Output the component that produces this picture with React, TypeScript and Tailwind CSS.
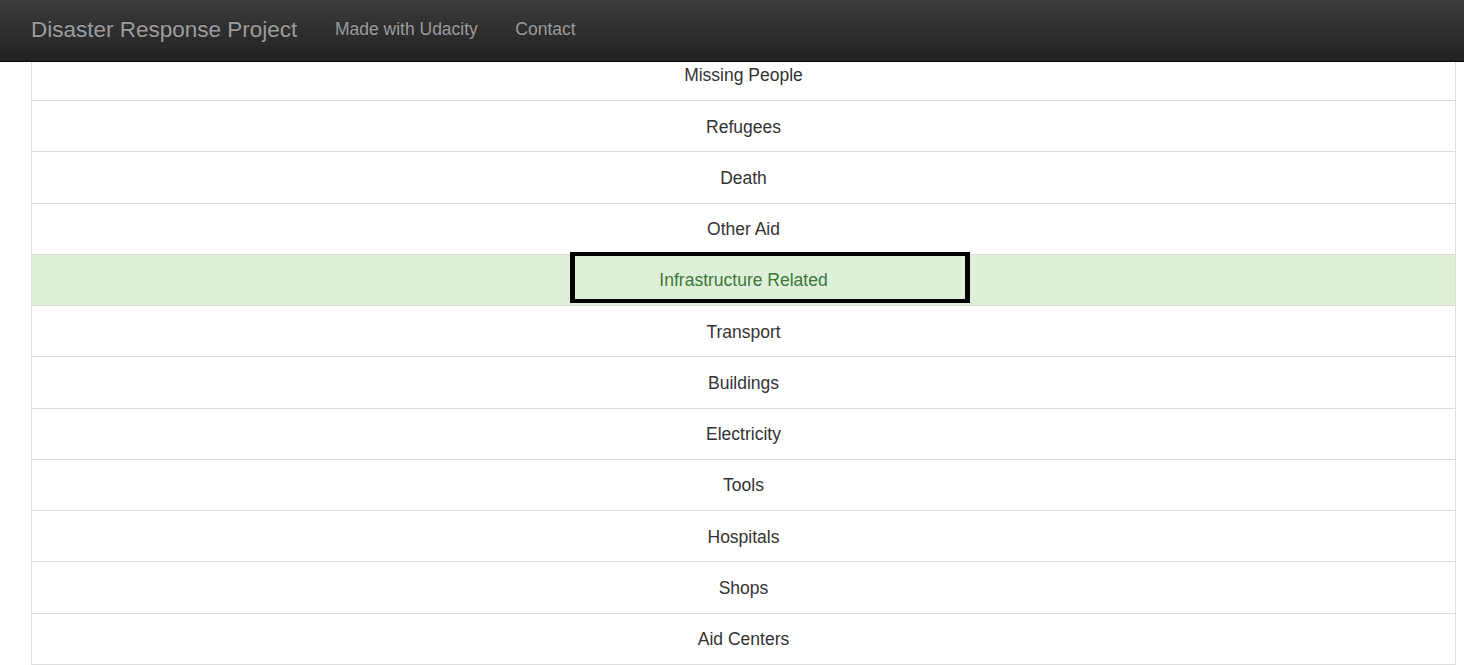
import React from "react";

const items = [
  "Missing People",
  "Refugees",
  "Death",
  "Other Aid",
  "Infrastructure Related",
  "Transport",
  "Buildings",
  "Electricity",
  "Tools",
  "Hospitals",
  "Shops",
  "Aid Centers",
];

export default function App() {
  return (
    <div className="min-h-[665px] bg-white font-['Liberation_Sans',Arial,sans-serif] text-[#333]">
      <nav className="fixed left-0 right-0 top-0 z-10 flex h-[62px] items-center border-b border-[#080808] bg-gradient-to-b from-[#3c3c3c] to-[#222] pb-[2px] pl-[12.25px]">
        <span className="px-[18.75px] text-[22.5px] leading-[25px] text-[#9d9d9d] [text-shadow:0_-1px_0_rgba(0,0,0,0.25)]">
          Disaster Response Project
        </span>
        <span className="px-[18.75px] text-[17.5px] leading-[25px] text-[#9d9d9d] [text-shadow:0_-1px_0_rgba(0,0,0,0.25)]">
          Made with Udacity
        </span>
        <span className="px-[18.75px] text-[17.5px] leading-[25px] text-[#9d9d9d] [text-shadow:0_-1px_0_rgba(0,0,0,0.25)]">
          Contact
        </span>
      </nav>
      <main className="pt-[49.75px] pl-[31px]">
        <ul className="relative w-[1425px] border-x border-[#ddd]">
          {items.map((it) => {
            const success = it === "Infrastructure Related";
            return (
              <li
                key={it}
                className={`flex h-[51.25px] items-center justify-center border-b border-[#ddd] pt-[2px] text-[17.5px] leading-[25px] ${
                  success ? "bg-[#dff0d8] text-[#3c763d]" : "bg-white text-[#333]"
                }`}
              >
                {it}
              </li>
            );
          })}
          <div className="pointer-events-none absolute left-[538px] top-[202.25px] h-[51px] w-[400px] border-[4px] border-black [border-left-width:5px] [border-right-width:5px]" />
        </ul>
      </main>
    </div>
  );
}
